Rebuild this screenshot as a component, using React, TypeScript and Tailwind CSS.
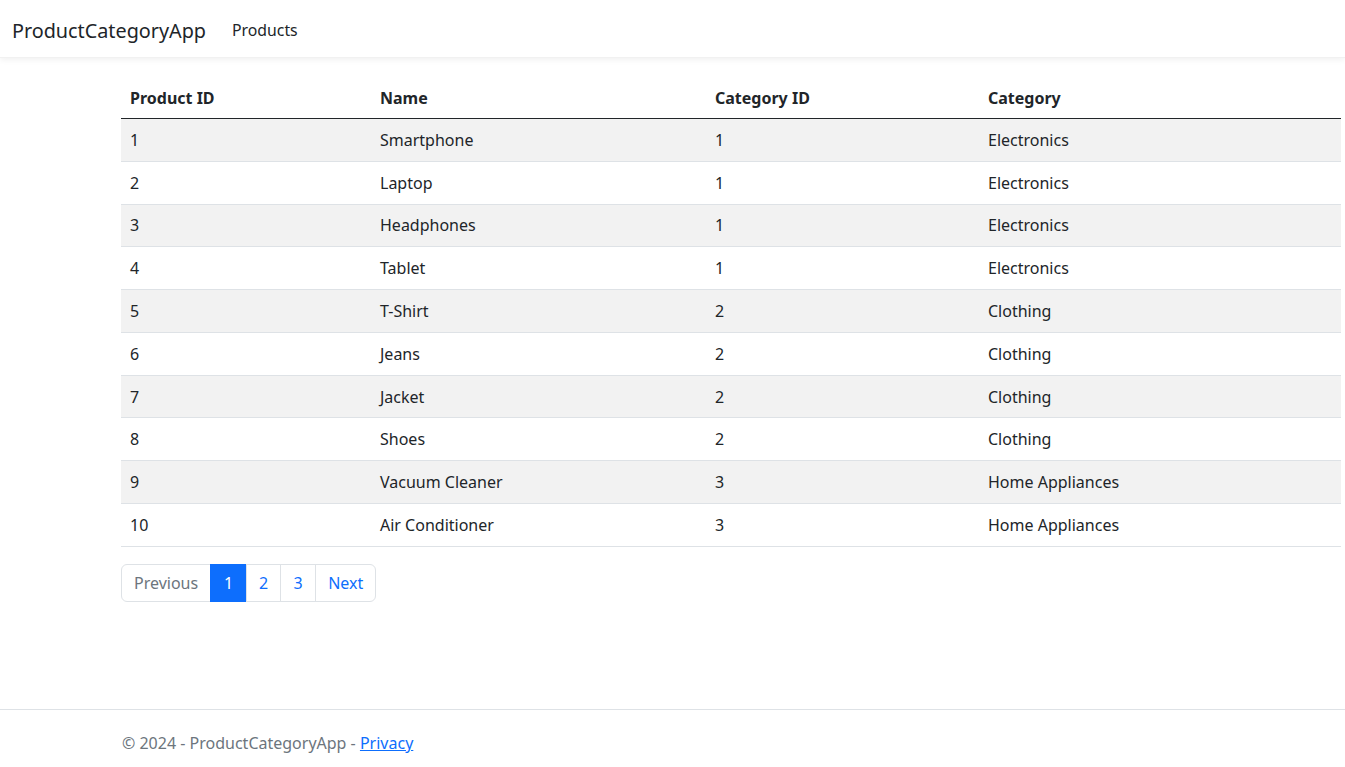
const products = [
  { id: 1, name: 'Smartphone', categoryId: 1, category: 'Electronics' },
  { id: 2, name: 'Laptop', categoryId: 1, category: 'Electronics' },
  { id: 3, name: 'Headphones', categoryId: 1, category: 'Electronics' },
  { id: 4, name: 'Tablet', categoryId: 1, category: 'Electronics' },
  { id: 5, name: 'T-Shirt', categoryId: 2, category: 'Clothing' },
  { id: 6, name: 'Jeans', categoryId: 2, category: 'Clothing' },
  { id: 7, name: 'Jacket', categoryId: 2, category: 'Clothing' },
  { id: 8, name: 'Shoes', categoryId: 2, category: 'Clothing' },
  { id: 9, name: 'Vacuum Cleaner', categoryId: 3, category: 'Home Appliances' },
  { id: 10, name: 'Air Conditioner', categoryId: 3, category: 'Home Appliances' },
];

export default function App() {
  return (
    <div className="min-h-screen flex flex-col bg-white text-[#212529] font-['Noto_Sans',sans-serif] text-[16px]">
      {/* Navbar */}
      <header className="h-[58px] flex items-center pt-[4px] bg-white shadow-[0_2px_6px_rgba(0,0,0,0.06)] border-b border-[#f1f1f1]">
        <a className="ml-[12px] text-[19.8px] text-[#212529] leading-none">ProductCategoryApp</a>
        <a className="ml-[26px] text-[15.8px] text-[#212529] leading-none">Products</a>
      </header>

      {/* Main */}
      <main className="flex-1 pt-[20px] pl-[121px] pr-[4px]">
        <table className="w-[1220px] border-collapse text-left">
          <colgroup>
            <col className="w-[250px]" />
            <col className="w-[335px]" />
            <col className="w-[273px]" />
            <col className="w-[362px]" />
          </colgroup>
          <thead>
            <tr className="border-b border-[#212529]">
              <th className="px-[9px] py-[8px] leading-6 font-bold">Product ID</th>
              <th className="px-[9px] py-[8px] leading-6 font-bold">Name</th>
              <th className="px-[9px] py-[8px] leading-6 font-bold">Category ID</th>
              <th className="px-[9px] py-[8px] leading-6 font-bold">Category</th>
            </tr>
          </thead>
          <tbody>
            {products.map((p, i) => (
              <tr key={p.id} className={`border-b border-[#dee2e6] ${i % 2 === 0 ? 'bg-[#f2f2f2]' : 'bg-white'}`}>
                <td className="px-[9px] py-[8.9px] leading-6">{p.id}</td>
                <td className="px-[9px] py-[8.9px] leading-6">{p.name}</td>
                <td className="px-[9px] py-[8.9px] leading-6">{p.categoryId}</td>
                <td className="px-[9px] py-[8.9px] leading-6">{p.category}</td>
              </tr>
            ))}
          </tbody>
        </table>

        {/* Pagination */}
        <nav className="mt-[17px] flex">
          <ul className="flex">
            <li className="h-[38px] px-[12px] flex items-center border border-[#dee2e6] rounded-l-[6px] text-[#6c757d]">Previous</li>
            <li className="h-[38px] w-[37px] flex items-center justify-center bg-[#0d6efd] border border-[#0d6efd] text-white -ml-px">1</li>
            <li className="h-[38px] w-[35px] flex items-center justify-center border border-[#dee2e6] text-[#0d6efd] -ml-px">2</li>
            <li className="h-[38px] w-[36px] flex items-center justify-center border border-[#dee2e6] text-[#0d6efd] -ml-px">3</li>
            <li className="h-[38px] px-[12px] flex items-center border border-[#dee2e6] rounded-r-[6px] text-[#0d6efd] -ml-px">Next</li>
          </ul>
        </nav>
      </main>

      {/* Footer */}
      <footer className="h-[58px] border-t border-[#dee2e6] pt-[21px] pl-[122px] text-[#6c757d] leading-6">
        © 2024 - ProductCategoryApp - <a className="text-[#0d6efd] underline">Privacy</a>
      </footer>
    </div>
  );
}
